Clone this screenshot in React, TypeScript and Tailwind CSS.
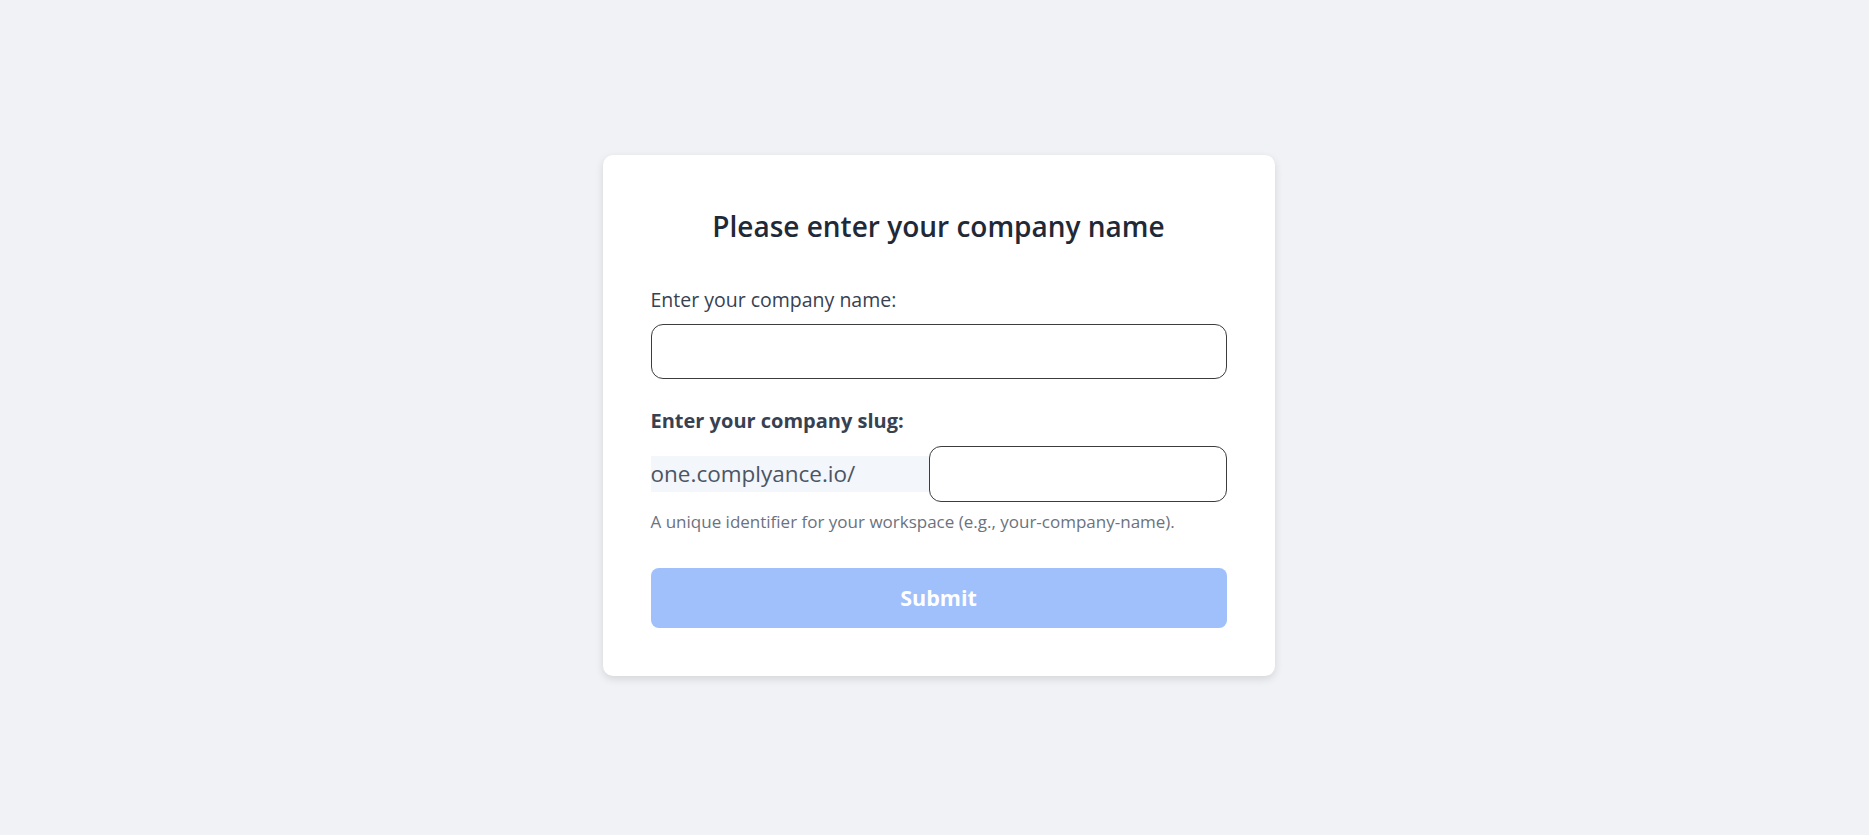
import { useState } from "react";

export default function App() {
  const [companyName, setCompanyName] = useState("");
  const [slug, setSlug] = useState("");

  const canSubmit = companyName.trim() !== "" && slug.trim() !== "";

  return (
    <div className="flex min-h-screen justify-center bg-[#f0f2f5] pt-[155px] pl-2 font-['Open_Sans',sans-serif]">
      <div className="h-fit w-[672px] rounded-[10px] bg-white p-12 shadow-[0_3px_8px_rgba(0,0,0,0.12)]">
        <h1 className="text-center text-[28px] leading-[46px] font-semibold text-[#1f2937]">
          Please enter your company name
        </h1>

        <form
          className="mt-[37px] flex flex-col"
          onSubmit={(event) => event.preventDefault()}
        >
          <label
            className="text-[19.5px] leading-[28px] text-[#374151]"
            htmlFor="company-name"
          >
            Enter your company name:
          </label>
          <input
            className="mt-[10px] h-[55px] w-full rounded-xl border border-[#3d3d3d] bg-white px-4 text-[18px] text-[#1f2937] outline-none"
            id="company-name"
            onChange={(event) => setCompanyName(event.target.value)}
            type="text"
            value={companyName}
          />

          <label
            className="mt-[28px] text-[20px] leading-[28px] font-bold text-[#374151]"
            htmlFor="company-slug"
          >
            Enter your company slug:
          </label>
          <div className="mt-[11px] flex items-center">
            <span className="flex h-9 w-[278px] items-center bg-[#f3f6fa] text-[22.5px] text-[#4b5563]">
              one.complyance.io/
            </span>
            <input
              className="h-[56px] flex-1 rounded-xl border border-[#3d3d3d] bg-white px-4 text-[18px] text-[#1f2937] outline-none"
              id="company-slug"
              onChange={(event) => setSlug(event.target.value)}
              type="text"
              value={slug}
            />
          </div>
          <p className="mt-[9px] text-[17px] leading-[22px] text-[#6b7280]">
            A unique identifier for your workspace (e.g., your-company-name).
          </p>

          <button
            className="mt-[35px] h-[60px] w-full rounded-lg bg-[#9fc0fb] text-[21.5px] font-bold text-white"
            disabled={!canSubmit}
            type="submit"
          >
            Submit
          </button>
        </form>
      </div>
    </div>
  );
}
